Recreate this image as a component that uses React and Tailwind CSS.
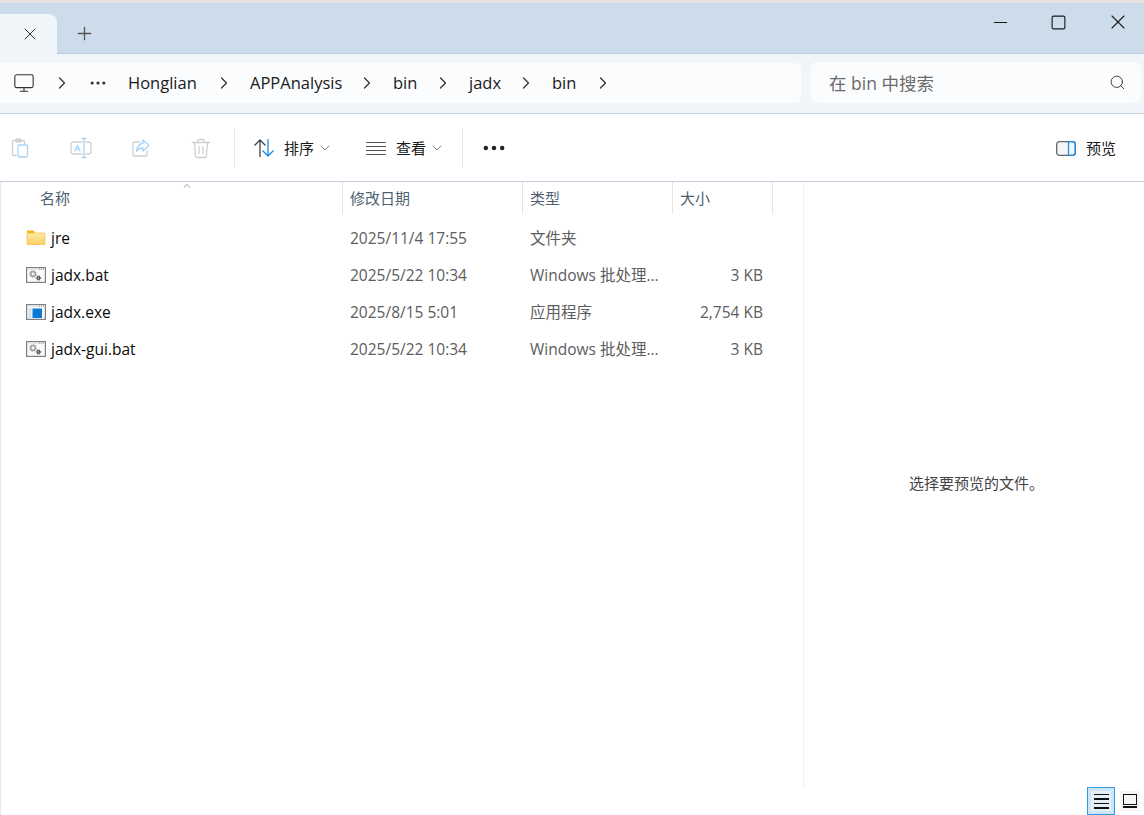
import React from "react";
import { ChevronRight, ChevronDown, ChevronUp, Plus, X, Minus, Square, Search, Monitor, Ellipsis } from "lucide-react";

const font = { fontFamily: '"Open Sans", "Noto Sans CJK SC", sans-serif' };

const crumbs = [
  { label: "Honglian", w: "w-[122px]" },
  { label: "APPAnalysis", w: "w-[143px]" },
  { label: "bin", w: "w-[76px]" },
  { label: "jadx", w: "w-[83px]" },
  { label: "bin", w: "w-[77px]" },
];

const files = [
  { name: "jre", date: "2025/11/4 17:55", type: "文件夹", size: "", icon: "folder" },
  { name: "jadx.bat", date: "2025/5/22 10:34", type: "Windows 批处理...", size: "3 KB", icon: "bat" },
  { name: "jadx.exe", date: "2025/8/15 5:01", type: "应用程序", size: "2,754 KB", icon: "exe" },
  { name: "jadx-gui.bat", date: "2025/5/22 10:34", type: "Windows 批处理...", size: "3 KB", icon: "bat" },
];

const FolderIcon = () => (
  <svg width="20" height="16" viewBox="0 0 20 16" className="-mt-[2px]">
    <defs>
      <linearGradient id="folderFill" x1="0" y1="0" x2="0" y2="1">
        <stop offset="0" stopColor="#fde9a8" />
        <stop offset="1" stopColor="#fbcf62" />
      </linearGradient>
    </defs>
    <path d="M1 0.500h6.500l2 2.500H1z" fill="#f7b516" />
    <rect x="1" y="3" width="18" height="11.500" rx="0.800" fill="url(#folderFill)" stroke="#f2bd3c" strokeWidth="0.700" />
  </svg>
);

const WindowFrame = ({ children }) => (
  <svg width="20" height="17" viewBox="0 0 20 17">
    <rect x="0.600" y="0.600" width="18.800" height="14.800" fill="#fbfbfb" stroke="#7f7f7f" strokeWidth="1.200" />
    <rect x="1.200" y="1.200" width="17.600" height="1.600" fill="#e2e2e2" />
    <path d="M13 2h1M15 2h1M17 2h1" stroke="#8a8a8a" strokeWidth="1" />
    {children}
  </svg>
);

const BatIcon = () => (
  <WindowFrame>
    <circle cx="7" cy="7" r="2.300" fill="none" stroke="#a3a8ad" strokeWidth="1.800" />
    <circle cx="7" cy="7" r="3.400" fill="none" stroke="#a3a8ad" strokeWidth="1" strokeDasharray="1.300 1.300" />
    <circle cx="12.500" cy="11" r="1.300" fill="none" stroke="#4a4a4a" strokeWidth="1.300" />
    <circle cx="12.500" cy="11" r="2.300" fill="none" stroke="#4a4a4a" strokeWidth="0.800" strokeDasharray="1 1" />
  </WindowFrame>
);

const ExeIcon = () => (
  <WindowFrame>
    <path d="M2.500 5h3M2.500 7h3M2.500 9h3M2.500 11h3M2.500 13h3" stroke="#9fc4e2" strokeWidth="1" />
    <rect x="6.500" y="4.500" width="9.500" height="9.500" fill="#0a78d4" />
  </WindowFrame>
);

const fileIcons = { folder: FolderIcon, bat: BatIcon, exe: ExeIcon };

const ToolIcon = ({ children }) => (
  <svg width="22" height="22" viewBox="0 0 22 22" fill="none" strokeWidth="1.300" strokeLinecap="round" strokeLinejoin="round">
    {children}
  </svg>
);

const ColumnHead = ({ label, w, pl = "pl-[7px]" }) => (
  <div className={`${w} ${pl} h-[32px] flex items-center border-r border-[#e5e5e5] text-[15px] text-[#4f5f72]`}>{label}</div>
);

const App = () => {
  return (
    <div className="w-[1144px] h-[815px] flex flex-col bg-white overflow-hidden text-[#1a1a1a]" style={font}>
      <div className="h-[3px] bg-[#e4e3df]"></div>

      {/* title bar */}
      <div className="h-[51px] shrink-0 bg-[#cddceb] border-b border-[#bfcfdf] flex items-end">
        <div className="w-[57px] h-[40px] bg-[#f0f5f9] rounded-tr-lg flex items-center justify-end pr-[17px] mb-[-1px]">
          <X size={20} strokeWidth={1.200} className="text-[#333]" />
        </div>
        <div className="ml-[17px] h-[40px] flex items-center">
          <Plus size={21} strokeWidth={1.500} className="text-[#555]" />
        </div>
        <div className="ml-auto self-start flex items-center h-[38px] text-[#1a1a1a]">
          <Minus size={21} strokeWidth={1.300} className="mr-[39px]" />
          <Square size={17} strokeWidth={1.600} className="mr-[39px]" />
          <X size={24} strokeWidth={1.100} className="mr-[14px]" />
        </div>
      </div>

      {/* address row */}
      <div className="h-[60px] shrink-0 bg-[#f0f5f9] border-b border-[#c4d0dd] flex items-center pb-[2px]">
        <div className="w-[801px] h-[40px] bg-[#fbfcfe] rounded-r-md flex items-center text-[16.500px]">
          <Monitor size={22} strokeWidth={1.200} className="ml-[13px] text-[#333]" />
          <ChevronRight size={20} strokeWidth={1.500} className="ml-[17px] text-[#333]" />
          <Ellipsis size={20} strokeWidth={1.800} className="ml-[16px] text-[#333]" />
          <div className="ml-[20px] flex">
            {crumbs.map((c, i) => (
              <div key={i} className={`${c.w} flex items-center justify-between pr-[16px]`}>
                <span className="pt-[1px]">{c.label}</span>
                <ChevronRight size={20} strokeWidth={1.500} className="text-[#333]" />
              </div>
            ))}
          </div>
        </div>
        <div className="ml-[10px] w-[330px] h-[41px] bg-[#fbfcfe] rounded-md flex items-center justify-between pl-[18px] pr-[15px] text-[#6b6b6b]">
          <span className="text-[17.500px] pt-[1px]">在 bin 中搜索</span>
          <Search size={17} strokeWidth={1.300} className="text-[#333]" />
        </div>
      </div>

      {/* toolbar */}
      <div className="h-[68px] shrink-0 border-b border-[#c4d0dd] flex items-center text-[15px] pt-[1px]">
        <div className="ml-[10px] flex items-center gap-[38px]">
          <ToolIcon>
            <path d="M6 18.500H4a1.500 1.500 0 0 1-1.500-1.500V5A1.500 1.500 0 0 1 4 3.500h9A1.500 1.500 0 0 1 14.500 5v2" stroke="#cfcfcf" />
            <rect x="6" y="2" width="5" height="3" rx="1" stroke="#cfcfcf" />
            <rect x="8" y="8" width="9.500" height="12" rx="1.500" stroke="#a8d4f8" />
          </ToolIcon>
          <ToolIcon>
            <path d="M12 5H3.500A2.500 2.500 0 0 0 1 7.500v7A2.500 2.500 0 0 0 3.500 17H12M16 5h2.500A2.500 2.500 0 0 1 21 7.500v7a2.500 2.500 0 0 1-2.500 2.500H16" stroke="#cfcfcf" />
            <path d="M5 14l2.500-6 2.500 6M6 12h3" stroke="#a8d4f8" />
            <path d="M14 1.500v19M12 1.500h4M12 20.500h4" stroke="#a8d4f8" />
          </ToolIcon>
          <ToolIcon>
            <path d="M10 5H5a2 2 0 0 0-2 2v10a2 2 0 0 0 2 2h10a2 2 0 0 0 2-2v-3" stroke="#cfcfcf" />
            <path d="M13 3l6 5.500-6 5.500v-3c-3 0-5 1-6.500 3.500C7 10 9 7 13 6z" stroke="#a8d4f8" />
          </ToolIcon>
          <ToolIcon>
            <path d="M2.500 5.500h17M8 5.500V3.500a1 1 0 0 1 1-1h4a1 1 0 0 1 1 1v2M4.500 5.500l1 13a2 2 0 0 0 2 2h7a2 2 0 0 0 2-2l1-13M9 9.500v7M13 9.500v7" stroke="#cfcfcf" />
          </ToolIcon>
        </div>
        <div className="ml-[22px] w-px h-[40px] bg-[#e6e6e6]"></div>
        <svg width="22" height="22" viewBox="0 0 22 22" fill="none" strokeWidth="1.300" className="ml-[18px]">
          <path d="M7 20V3M1.500 8.500L7 3l5.500 5.500" stroke="#444" />
          <path d="M15 2v17M9.500 13.500L15 19l5.500-5.500" stroke="#1d8ee6" />
        </svg>
        <span className="ml-[9px]">排序</span>
        <ChevronDown size={16} strokeWidth={1.200} className="ml-[3px] text-[#666]" />
        <div className="ml-[33px] w-[20px] flex flex-col gap-[3px]">
          <div className="h-px bg-[#555]"></div>
          <div className="h-px bg-[#555]"></div>
          <div className="h-px bg-[#555]"></div>
          <div className="h-px bg-[#555]"></div>
        </div>
        <span className="ml-[10px]">查看</span>
        <ChevronDown size={16} strokeWidth={1.200} className="ml-[3px] text-[#666]" />
        <div className="ml-[17px] w-px h-[40px] bg-[#e6e6e6]"></div>
        <Ellipsis size={28} strokeWidth={1.800} className="ml-[17px] text-[#222]" />
        <div className="ml-auto flex items-center mr-[28px]">
          <svg width="20" height="15" viewBox="0 0 20 15" fill="none" strokeWidth="1.300">
            <rect x="0.700" y="0.700" width="18.600" height="13.600" rx="2.500" fill="#f4f7fa" stroke="#666" />
            <path d="M12.500 0.700h4.300a2.500 2.500 0 0 1 2.500 2.500v8.600a2.500 2.500 0 0 1-2.500 2.500h-4.300z" stroke="#1d8ee6" />
          </svg>
          <span className="ml-[10px]">预览</span>
        </div>
      </div>

      {/* content */}
      <div className="flex-1 flex relative border-l border-[#e8e8e8]">
        <div className="w-[803px] h-[605px] border-r border-[#f0f0f0] flex flex-col">
          <div className="flex relative">
            <ChevronUp size={12} strokeWidth={1.200} className="absolute left-[180px] top-[-2px] text-[#555]" />
            <ColumnHead label="名称" w="w-[342px]" pl="pl-[39px]" />
            <ColumnHead label="修改日期" w="w-[180px]" />
            <ColumnHead label="类型" w="w-[150px]" />
            <ColumnHead label="大小" w="w-[100px]" />
          </div>
          <div className="pt-[6px] text-[15.500px]">
            {files.map((f) => {
              const Icon = fileIcons[f.icon];
              return (
                <div key={f.name} className="h-[37px] flex items-center">
                  <div className="w-[342px] flex items-center pl-[25px]">
                    <div className="w-[25px] flex"><Icon /></div>
                    <span className="text-[#0a0a0a]">{f.name}</span>
                  </div>
                  <div className="w-[180px] pl-[7px] text-[#5d5d5d]">{f.date}</div>
                  <div className="w-[150px] pl-[7px] text-[#5d5d5d]">{f.type}</div>
                  <div className="w-[90px] text-right text-[#5d5d5d]">{f.size}</div>
                </div>
              );
            })}
          </div>
        </div>
        <div className="flex-1 h-[603px] flex items-center justify-center text-[15px] text-[#444] pl-[5px]">
          选择要预览的文件。
        </div>

        {/* view switch */}
        <div className="absolute right-[4px] bottom-0 flex items-end gap-[5px]">
          <div className="w-[28px] h-[28px] bg-[#cde6f7] border border-[#2f9be0] flex items-center justify-center">
            <div className="w-[20px] h-[20px] bg-[#e4eff7] flex flex-col items-center justify-center gap-[3px]">
              <div className="w-[15px] h-[1.500px] bg-[#111]"></div>
              <div className="w-[15px] h-[1.500px] bg-[#111]"></div>
              <div className="w-[15px] h-[1.500px] bg-[#111]"></div>
              <div className="w-[15px] h-[1.500px] bg-[#111]"></div>
            </div>
          </div>
          <div className="w-[20px] h-[20px] bg-[#f5f5f5] flex flex-col items-center justify-center gap-[1px] mb-[4px]">
            <div className="w-[14px] h-[11px] border-[1.500px] border-[#111]"></div>
            <div className="w-[14px] h-[1.500px] bg-[#111]"></div>
          </div>
        </div>
      </div>
    </div>
  );
};

export default App;
